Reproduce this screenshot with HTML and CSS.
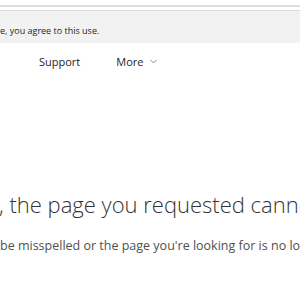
FILE: index.html
```html
<!DOCTYPE html>
<html lang="en">
<head>
  <meta charset="UTF-8">
  <meta name="viewport" content="width=device-width, initial-scale=1.0">
  <title>Page not found</title>
  <link rel="stylesheet" href="styles.css">
</head>
<body>

  <div class="topline"></div>

  <div class="cookie-bar">
    <p><span class="cut">By continuing to browse this sit</span>e, you agree to this use.</p>
  </div>

  <nav class="nav">
    <a href="#" class="nav-item"><span class="cut">Deals</span></a>
    <a href="#" class="nav-item">Support</a>
    <a href="#" class="nav-item">More
      <svg class="chevron" width="7" height="5" viewBox="0 0 7 5"><path d="M0.5 1 L3.5 4 L6.5 1" fill="none" stroke="#8a8a8a" stroke-width="1"/></svg>
    </a>
  </nav>

  <div class="error">
    <h1><span class="cut">Sorry</span>, the page you requested cannot be found.</h1>
    <p><span class="cut">The URL may </span>be misspelled or the page you're looking for is no longer available.</p>
  </div>

</body>
</html>
```

FILE: styles.css
```css
body {
  font-family: "Open Sans", "Noto Sans", Arial, sans-serif;
  margin: 0;
  background: #fff;
  overflow: hidden;
  white-space: nowrap;
}
.cut {
  display: inline-block;
  width: 0;
  direction: rtl;
  overflow: hidden;
}
.topline {
  height: 5px;
  border-bottom: 2px solid #dedede;
}
.cookie-bar {
  height: 32px;
  margin-top: 3px;
  border-top: 1px solid #dcdcdc;
  background: #f2f2f2;
}
.cookie-bar p {
  margin: 0;
  padding-top: 9px;
  font-size: 9px;
  line-height: 14px;
  color: #262626;
}
.nav {
  display: flex;
  gap: 36px;
  padding: 10px 0 0 3px;
  height: 30px;
}
.nav-item {
  font-size: 11px;
  line-height: 18px;
  color: #262626;
  text-decoration: none;
}
.chevron {
  margin-left: 4px;
  vertical-align: 2px;
}
.error {
  padding-top: 100px;
}
.error h1 {
  margin: 0 0 0 -1px;
  font-size: 22px;
  font-weight: 300;
  line-height: 30px;
  color: #333;
}
.error p {
  margin: 13px 0 0 0;
  font-size: 12.5px;
  line-height: 18px;
  color: #505050;
}
```
